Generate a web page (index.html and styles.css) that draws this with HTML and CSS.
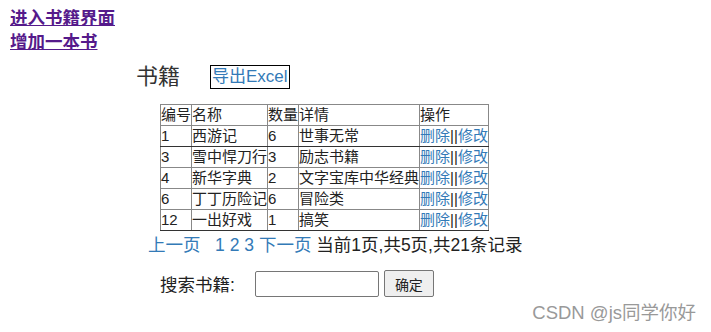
FILE: index.html
```html
<!DOCTYPE html>
<html lang="zh">
<head>
<meta charset="utf-8">
<title>书籍</title>
<link rel="stylesheet" href="styles.css">
</head>
<body>
<nav class="nav">
  <a class="nav-link" href="#">进入书籍界面</a>
  <a class="nav-link" href="#">增加一本书</a>
</nav>
<main class="main">
  <div class="title-row">
    <h2 class="title">书籍</h2>
    <a class="export" href="#">导出Excel</a>
  </div>
  <table class="books">
    <tr><td>编号</td><td>名称</td><td>数量</td><td>详情</td><td>操作</td></tr>
    <tr class="dark-b"><td>1</td><td class="dark-l">西游记</td><td>6</td><td>世事无常</td><td><a href="#">删除</a>||<a href="#">修改</a></td></tr>
    <tr><td>3</td><td class="dark-l">雪中悍刀行</td><td>3</td><td>励志书籍</td><td><a href="#">删除</a>||<a href="#">修改</a></td></tr>
    <tr><td>4</td><td class="dark-l">新华字典</td><td>2</td><td>文字宝库中华经典</td><td><a href="#">删除</a>||<a href="#">修改</a></td></tr>
    <tr><td>6</td><td class="dark-l">丁丁历险记</td><td>6</td><td>冒险类</td><td><a href="#">删除</a>||<a href="#">修改</a></td></tr>
    <tr class="dark-b"><td>12</td><td class="dark-l">一出好戏</td><td>1</td><td>搞笑</td><td><a href="#">删除</a>||<a href="#">修改</a></td></tr>
  </table>
  <div class="pager">
    <a href="#">上一页</a>&nbsp;&nbsp;&nbsp;<a href="#">1</a> <a href="#">2</a> <a href="#">3</a> <a href="#">下一页</a> <span>当前1页,共5页,共21条记录</span>
  </div>
  <form class="search">
    <label class="search-label">搜索书籍:</label>
    <input class="search-input" type="text">
    <button class="search-btn" type="button">确定</button>
  </form>
</main>
<div class="watermark">CSDN @js同学你好</div>
</body>
</html>
```
FILE: styles.css
```css
html, body {
  margin: 0;
  padding: 0;
  background: #fff;
}
body {
  font-family: "Liberation Sans", "Noto Sans CJK SC", sans-serif;
  color: #222;
  position: relative;
  height: 332px;
  overflow: hidden;
}
a { color: #337ab7; text-decoration: none; }
.nav {
  display: flex;
  flex-direction: column;
  align-items: flex-start;
  padding: 6px 0 0 10px;
}
.nav-link {
  color: #551a8b;
  font-weight: bold;
  font-size: 17.5px;
  line-height: 24px;
  text-decoration: underline;
}
.main {
  display: flex;
  flex-direction: column;
  align-items: flex-start;
}
.title-row {
  display: flex;
  align-items: center;
  margin: 11px 0 0 136px;
  height: 24px;
}
.title {
  font-size: 22px;
  font-weight: normal;
  margin: 0;
  color: #333;
  line-height: 24px;
}
.export {
  margin-left: 30px;
  border: 1px solid #000;
  font-size: 17px;
  line-height: 22px;
  padding: 0 1px;
}
.books {
  margin: 15px 0 0 160px;
  border-collapse: collapse;
  font-size: 15px;
  color: #222;
}
.books td {
  border: 1px solid #888;
  padding: 0;
  height: 20px;
  line-height: 20px;
  white-space: nowrap;
}
.books .dark-b td { border-bottom-color: #333; }
.books td.dark-l { border-left-color: #333; }
.pager {
  margin: 2px 0 0 148px;
  font-size: 17.5px;
  line-height: 24px;
  color: #222;
}
.search {
  display: flex;
  align-items: center;
  margin: 13px 0 0 160px;
}
.search-label {
  font-size: 17.5px;
  margin-right: 20px;
}
.search-input {
  width: 118px;
  height: 20px;
  border: 1px solid #767676;
  border-radius: 2px;
  padding: 2px 2px;
  margin: 0;
}
.search-btn {
  margin-left: 5px;
  height: 27px;
  padding: 0 10px;
  font-size: 14px;
  font-family: "Noto Sans CJK SC", sans-serif;
  background: #efefef;
  border: 1px solid #767676;
  border-radius: 2px;
  color: #222;
}
.watermark {
  position: absolute;
  right: 15px;
  bottom: 8px;
  font-size: 18.5px;
  color: #999;
}
```
